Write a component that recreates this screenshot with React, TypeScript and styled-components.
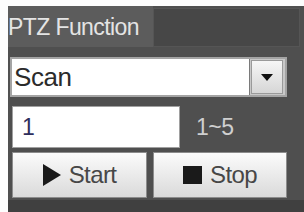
import styled, { createGlobalStyle } from "styled-components";

const Global = createGlobalStyle`
  html, body {
    margin: 0;
    padding: 0;
    background: #fdfdfd;
    font-family: "Liberation Sans", Arial, sans-serif;
  }
`;

const Panel = styled.div`
  margin: 6px 0 0 8px;
  width: 296px;
  height: 206px;
  background: #4f4f4f;
  display: flex;
  flex-direction: column;
`;

const Header = styled.div`
  display: flex;
  height: 41px;
`;

const Tab = styled.div`
  width: 145px;
  background: #5c5c5c;
  color: #e4e4e4;
  font-size: 23px;
  letter-spacing: -0.6px;
  display: flex;
  align-items: center;
  padding-top: 2px;
  box-sizing: border-box;
`;

const HeaderFill = styled.div`
  flex: 1;
  margin: 2px 4px 0 0;
  background: #474747;
  border: 1px solid #555;
`;

const Body = styled.div`
  flex: 1;
  display: flex;
  flex-direction: column;
  padding: 10px 0 0 2px;
  gap: 9px;
`;

const SelectBox = styled.div`
  display: flex;
  width: 277px;
  height: 40px;
  border: 2px solid #a4a4a4;
  box-sizing: border-box;
  background: #c8c8c8;
`;

const SelectValue = styled.div`
  flex: 1;
  background: #fff;
  color: #2b2b2b;
  font-size: 26px;
  letter-spacing: -0.4px;
  display: flex;
  align-items: center;
  padding-left: 2px;
  border-right: 1px solid #7a7a7a;
`;

const SelectButton = styled.div`
  width: 30px;
  margin: 1px 2px 1px 1px;
  background: linear-gradient(#f6f6f6, #d6d6d6);
  border: 1px solid #9a9a9a;
  display: flex;
  align-items: center;
  justify-content: center;
`;

const Arrow = styled.div`
  width: 0;
  height: 0;
  border-left: 6px solid transparent;
  border-right: 6px solid transparent;
  border-top: 7px solid #111;
`;

const InputRow = styled.div`
  display: flex;
  align-items: center;
  gap: 16px;
`;

const NumberInput = styled.div`
  width: 168px;
  height: 42px;
  margin-left: 2px;
  box-sizing: border-box;
  background: #fff;
  border: 1px solid #a0a0a0;
  color: #2e2e5c;
  font-size: 23px;
  display: flex;
  align-items: center;
  padding-left: 9px;
`;

const Range = styled.span`
  color: #cfcfcf;
  font-size: 23px;
  letter-spacing: -0.5px;
`;

const ButtonRow = styled.div`
  display: flex;
  gap: 6px;
  margin: -5px 0 0 2px;
`;

const ActionButton = styled.button<{ w: number }>`
  width: ${(p) => p.w}px;
  height: 46px;
  border: 1px solid #8c8c8c;
  background: linear-gradient(#fbfbfb, #dadada);
  color: #474747;
  font-family: "Liberation Sans", Arial, sans-serif;
  font-size: 24px;
  letter-spacing: -0.6px;
  display: flex;
  align-items: center;
  justify-content: center;
  gap: 8px;
  padding: 0;
`;

const Play = styled.span`
  width: 0;
  height: 0;
  border-top: 11px solid transparent;
  border-bottom: 11px solid transparent;
  border-left: 18px solid #1a1a1a;
`;

const Square = styled.span`
  width: 19px;
  height: 18px;
  background: #1a1a1a;
`;

const BottomBand = styled.div`
  height: 12px;
  background: #404040;
  margin-top: auto;
`;

export default function App() {
  return (
    <>
      <Global />
      <Panel>
        <Header>
          <Tab>PTZ Function</Tab>
          <HeaderFill />
        </Header>
        <Body>
          <SelectBox>
            <SelectValue>Scan</SelectValue>
            <SelectButton>
              <Arrow />
            </SelectButton>
          </SelectBox>
          <InputRow>
            <NumberInput>1</NumberInput>
            <Range>1~5</Range>
          </InputRow>
          <ButtonRow>
            <ActionButton w={135}>
              <Play />
              Start
            </ActionButton>
            <ActionButton w={134}>
              <Square />
              Stop
            </ActionButton>
          </ButtonRow>
        </Body>
        <BottomBand />
      </Panel>
    </>
  );
}
